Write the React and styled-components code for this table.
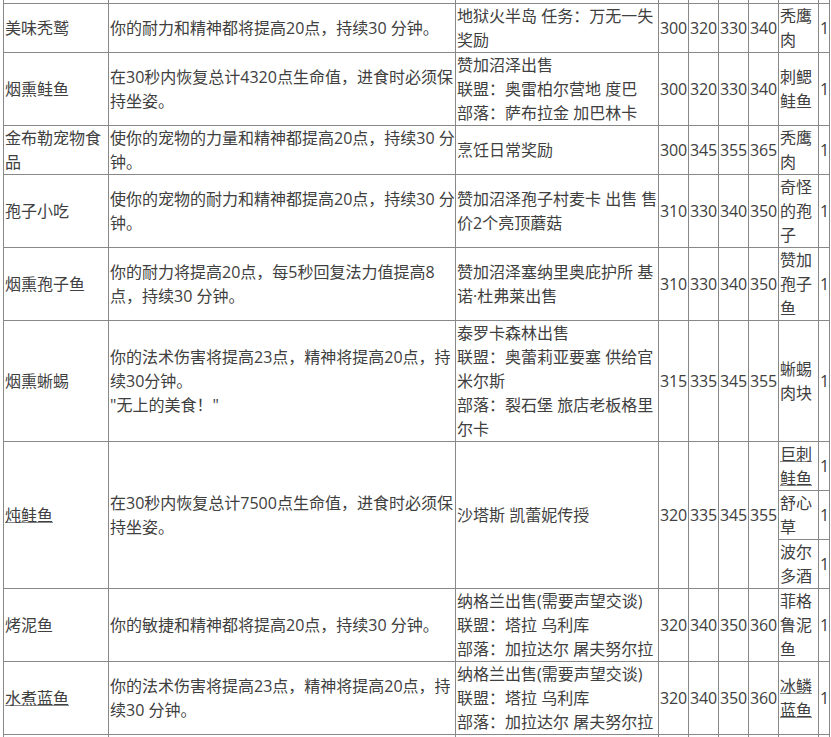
import React from 'react';
import styled, { createGlobalStyle } from 'styled-components';

const GlobalStyle = createGlobalStyle`
    html, body {
        margin: 0;
        padding: 0;
        background: #fff;
    }
    body {
        font-family: 'Open Sans', 'Noto Sans CJK SC', sans-serif;
        color: #404040;
    }
`;

const sales = ['纳格兰出售(需要声望交谈)', '联盟：塔拉 乌利库', '部落：加拉达尔 屠夫努尔拉'];

const recipes = [
    { name: '美味秃鹫', desc: ['你的耐力和精神都将提高20点，持续30 分钟。'], src: ['地狱火半岛 任务：万无一失', '奖励'], lv: [300, 320, 330, 340], mats: [{ name: '秃鹰肉', n: 1 }] },
    { name: '烟熏鲑鱼', desc: ['在30秒内恢复总计4320点生命值，进食时必须保', '持坐姿。'], src: ['赞加沼泽出售', '联盟：奥雷柏尔营地 度巴', '部落：萨布拉金 加巴林卡'], lv: [300, 320, 330, 340], mats: [{ name: '刺鳃鲑鱼', n: 1 }] },
    { name: '金布勒宠物食品', desc: ['使你的宠物的力量和精神都提高20点，持续30 分', '钟。'], src: ['烹饪日常奖励'], lv: [300, 345, 355, 365], mats: [{ name: '秃鹰肉', n: 1 }] },
    { name: '孢子小吃', desc: ['使你的宠物的耐力和精神都提高20点，持续30 分', '钟。'], src: ['赞加沼泽孢子村麦卡 出售 售', '价2个亮顶蘑菇'], lv: [310, 330, 340, 350], mats: [{ name: '奇怪的孢子', n: 1 }] },
    { name: '烟熏孢子鱼', desc: ['你的耐力将提高20点，每5秒回复法力值提高8', '点，持续30 分钟。'], src: ['赞加沼泽塞纳里奥庇护所 基', '诺·杜弗莱出售'], lv: [310, 330, 340, 350], mats: [{ name: '赞加孢子鱼', n: 1 }] },
    { name: '烟熏蜥蜴', desc: ['你的法术伤害将提高23点，精神将提高20点，持', '续30分钟。', '"无上的美食！"'], src: ['泰罗卡森林出售', '联盟：奥蕾莉亚要塞 供给官', '米尔斯', '部落：裂石堡 旅店老板格里', '尔卡'], lv: [315, 335, 345, 355], mats: [{ name: '蜥蜴肉块', n: 1 }] },
    { name: '炖鲑鱼', link: true, desc: ['在30秒内恢复总计7500点生命值，进食时必须保', '持坐姿。'], src: ['沙塔斯 凯蕾妮传授'], lv: [320, 335, 345, 355], mats: [{ name: '巨刺鲑鱼', n: 1, link: true }, { name: '舒心草', n: 1 }, { name: '波尔多酒', n: 1 }] },
    { name: '烤泥鱼', desc: ['你的敏捷和精神都将提高20点，持续30 分钟。'], src: sales, lv: [320, 340, 350, 360], mats: [{ name: '菲格鲁泥鱼', n: 1 }] },
    { name: '水煮蓝鱼', link: true, desc: ['你的法术伤害将提高23点，精神将提高20点，持', '续30 分钟。'], src: sales, lv: [320, 340, 350, 360], mats: [{ name: '冰鳞蓝鱼', n: 1, link: true }] },
];

const colWidths = [105, 347, 203, 30, 30, 30, 30, 40, 11];

const Lines = ({ lines }) =>
    lines.map((l, i) => (
        <React.Fragment key={i}>
            {i > 0 && <br />}
            {l}
        </React.Fragment>
    ));

const App = () => {
    return (
        <Page>
            <GlobalStyle />
            <Table>
                <colgroup>
                    {colWidths.map((w, i) => (
                        <col key={i} style={{ width: w }} />
                    ))}
                </colgroup>
                <tbody>
                    <EdgeRow>
                        {colWidths.map((_, i) => (
                            <EdgeCell key={i} />
                        ))}
                    </EdgeRow>
                    {recipes.map((r) => {
                        const span = r.mats.length;
                        const [first, ...rest] = r.mats;
                        return (
                            <React.Fragment key={r.name}>
                                <tr>
                                    <Cell rowSpan={span}>
                                        {r.link ? <ItemLink href="#">{r.name}</ItemLink> : r.name}
                                    </Cell>
                                    <Cell rowSpan={span} $nowrap>
                                        <Lines lines={r.desc} />
                                    </Cell>
                                    <Cell rowSpan={span} $nowrap>
                                        <Lines lines={r.src} />
                                    </Cell>
                                    {r.lv.map((v, i) => (
                                        <NumCell key={i} rowSpan={span}>{v}</NumCell>
                                    ))}
                                    <Cell>{first.link ? <ItemLink href="#">{first.name}</ItemLink> : first.name}</Cell>
                                    <Cell>{first.n}</Cell>
                                </tr>
                                {rest.map((m) => (
                                    <tr key={m.name}>
                                        <Cell>{m.link ? <ItemLink href="#">{m.name}</ItemLink> : m.name}</Cell>
                                        <Cell>{m.n}</Cell>
                                    </tr>
                                ))}
                            </React.Fragment>
                        );
                    })}
                    <tr>
                        {colWidths.map((_, i) => (
                            <Cell key={i}>&nbsp;</Cell>
                        ))}
                    </tr>
                </tbody>
            </Table>
        </Page>
    );
};

export default App;

/* table styling */
const Page = styled.div`
    padding-left: 3px;
    overflow: hidden;
    height: 737px;
`;

const Table = styled.table`
    border-collapse: collapse;
    table-layout: fixed;
    width: 826px;
    font-size: 16px;
    line-height: 24px;
    color: #404040;
`;

const EdgeRow = styled.tr`
    height: 3px;
`;

const EdgeCell = styled.td`
    padding: 0;
    height: 3px;
    border: 1px solid #888;
    border-top: none;
`;

const Cell = styled.td`
    padding: 0 0 0 1px;
    border: 1px solid #888;
    vertical-align: middle;
    text-align: left;
    white-space: ${(p) => (p.$nowrap ? 'nowrap' : 'normal')};
    overflow: hidden;
    word-break: break-all;
`;

const NumCell = styled(Cell)`
    padding: 0 0 0 1px;
    white-space: nowrap;
    letter-spacing: -0.2px;
`;

const ItemLink = styled.a`
    color: #404040;
    text-decoration: underline;
    text-decoration-color: #888;
`;
